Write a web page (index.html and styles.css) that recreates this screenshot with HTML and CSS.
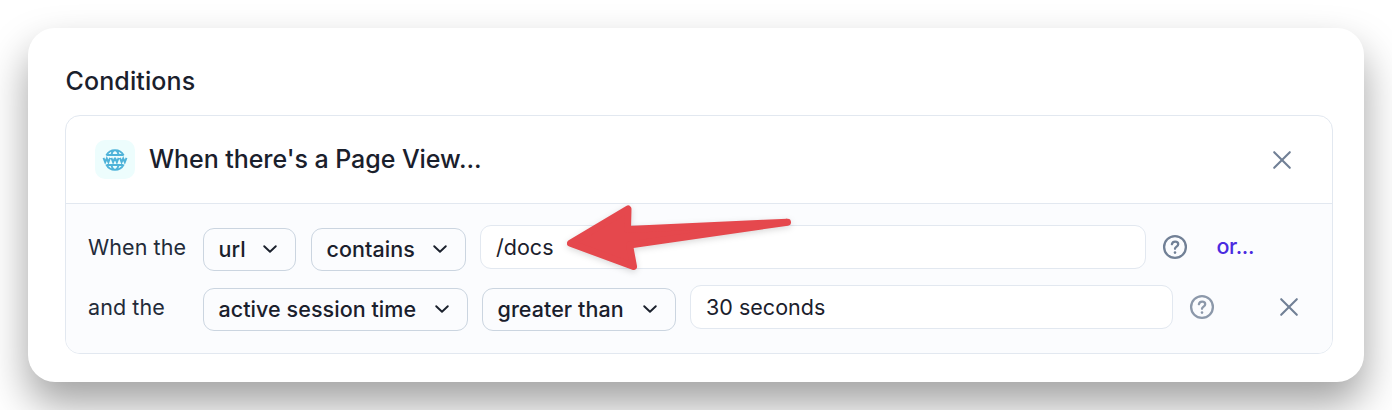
FILE: index.html
```html
<!DOCTYPE html>
<html lang="en">
<head>
<meta charset="utf-8">
<title>Conditions</title>
<link rel="stylesheet" href="styles.css">
</head>
<body>
<main class="card">
  <h2 class="title"><span>Conditions</span></h2>
  <section class="panel">
    <header class="panel-head">
      <span class="badge">
        <svg width="26" height="24" viewBox="0 0 26 24" fill="none" stroke="#4fb3d9" stroke-width="1.900">
          <path d="M4.300 7.400A9.800 9.800 0 0 1 21.700 7.400M4.300 16.600A9.800 9.800 0 0 0 21.700 16.600M4.500 7h17M4.500 17h17M9.300 7.500C10 4 11.500 2.300 13 2.300s3 1.700 3.700 5.200M9.300 16.500c.7 3.500 2.200 5.200 3.700 5.200s3-1.700 3.700-5.200"/>
          <path class="www" d="M1.500 9.800l1.700 4.400 1.600-3.700 1.600 3.700L8.100 9.800M9.400 9.800l1.700 4.400 1.600-3.700h.6l1.600 3.700L16.600 9.800M17.900 9.800l1.700 4.400 1.600-3.700 1.600 3.700L24.500 9.800"/>
        </svg>
      </span>
      <h3 class="event"><span>When there's a Page View...</span></h3>
      <button class="icon-btn" aria-label="Remove"><svg width="20" height="20" viewBox="0 0 20 20"><path class="cross" d="M2.200 2.200l15.600 15.600M17.800 2.200L2.200 17.800"/></svg></button>
    </header>
    <div class="rows">
      <div class="row">
        <span class="label"><span>When the</span></span>
        <button class="select url"><span>url</span><svg class="chev" width="16" height="10" viewBox="0 0 16 10"><path d="M2.200 2.200L8 7.800l5.800-5.600"/></svg></button>
        <button class="select contains"><span>contains</span><svg class="chev" width="16" height="10" viewBox="0 0 16 10"><path d="M2.200 2.200L8 7.800l5.800-5.600"/></svg></button>
        <div class="input docs"><span>/docs</span>
          <svg class="arrow" width="240" height="80" viewBox="560 200 240 80"><path d="M570.500 243.300L628 209L627.500 229.500L787.500 222.200L629.500 245L633.500 266.500Z"/></svg>
        </div>
        <svg class="help" width="26" height="26" viewBox="0 0 26 26"><circle cx="13" cy="13" r="10.900"/><path d="M9.900 10.200c.4-1.700 1.600-2.500 3.200-2.500 1.800 0 3.100 1.100 3.100 2.600 0 2.300-3.200 2.300-3.200 4.500"/><path class="dot" d="M13 18.500v.1"/></svg>
        <a class="or"><span>or...</span></a>
      </div>
      <div class="row">
        <span class="label"><span>and the</span></span>
        <button class="select session"><span>active session time</span><svg class="chev" width="16" height="10" viewBox="0 0 16 10"><path d="M2.200 2.200L8 7.800l5.800-5.600"/></svg></button>
        <button class="select greater"><span>greater than</span><svg class="chev" width="16" height="10" viewBox="0 0 16 10"><path d="M2.200 2.200L8 7.800l5.800-5.600"/></svg></button>
        <div class="input seconds"><span>30 seconds</span></div>
        <svg class="help muted" width="26" height="26" viewBox="0 0 26 26"><circle cx="13" cy="13" r="10.900"/><path d="M9.900 10.200c.4-1.700 1.600-2.500 3.200-2.500 1.800 0 3.100 1.100 3.100 2.600 0 2.300-3.200 2.300-3.200 4.500"/><path class="dot" d="M13 18.500v.1"/></svg>
        <button class="icon-btn row-remove" aria-label="Remove"><svg width="20" height="20" viewBox="0 0 20 20"><path class="cross" d="M2.200 2.200l15.600 15.600M17.800 2.200L2.200 17.800"/></svg></button>
      </div>
    </div>
  </section>
</main>
</body>
</html>
```
FILE: styles.css
```css
* { box-sizing: border-box; }
body {
  margin: 0;
  padding: 28px;
  height: 410px;
  overflow: hidden;
  background: #fff;
  color: #1a202c;
  font-family: Inter, sans-serif;
}
button { margin: 0; padding: 0; border: 0; background: none; font: inherit; color: inherit; }
svg { display: block; flex: none; }
.card {
  height: 354px;
  padding: 37px 31px 28px 37px;
  border-radius: 27px;
  background: #fff;
  box-shadow: 0 22px 42px rgba(0, 0, 0, .37);
}
.title { margin: 0; height: 50px; line-height: 32px; font-size: 25px; font-weight: 450; letter-spacing: .12px; padding-left: 0.500px; }
.panel { width: 1268px; height: 239px; border: 1px solid #e2e8f0; border-radius: 15px; overflow: hidden; }
.panel-head { display: flex; align-items: center; height: 88px; padding: 0 40.500px 0 29px; border-bottom: 1px solid #e2e8f0; }
.badge { display: flex; align-items: center; justify-content: center; width: 40px; height: 39px; border-radius: 10px; background: #edfdfd; }
.www { stroke-width: 1.900; }
.event { flex: 1; margin: -1px 0 0 14px; font-size: 25px; font-weight: 450; line-height: 32px; letter-spacing: -.05px; }
.cross { fill: none; stroke: #718096; stroke-width: 2.100; stroke-linecap: round; }
.rows { display: flex; flex-direction: column; gap: 16px; height: 149px; padding: 21px 22px; background: #fbfcfe; }
.row { display: flex; align-items: flex-start; height: 44px; }
.label { width: 115px; line-height: 44px; font-size: 21.500px; letter-spacing: .08px; color: #232b39; }
.select { display: flex; align-items: center; justify-content: space-between; height: 43px; margin-top: 3px; padding: 0 17.500px 1px 14.500px; border: 1px solid #cbd5e0; border-radius: 11px; font-size: 21.500px; font-weight: 500; letter-spacing: .06px; white-space: nowrap; }
.url { width: 93px; }
.contains { width: 155px; margin-left: 15px; }
.session { width: 265px; }
.greater { width: 194px; margin-left: 14px; }
.chev { fill: none; stroke: #1a202c; stroke-width: 1.900; stroke-linecap: round; stroke-linejoin: round; }
.input { position: relative; height: 44px; padding-left: 15px; border: 1px solid #e2e8f0; border-radius: 11px; background: #fff; line-height: 42px; font-size: 21.500px; letter-spacing: .02px; }
.docs { width: 666px; margin-left: 14px; }
.seconds { width: 483px; margin-left: 14px; }
.arrow { position: absolute; left: 79px; top: -26px; overflow: visible; filter: drop-shadow(0 2px 3px rgba(0, 0, 0, .15)); }
.arrow path { fill: #e5484d; stroke: #e5484d; stroke-width: 7; stroke-linejoin: round; }
.help { margin: 9px 0 0 16px; fill: none; stroke: #718096; stroke-width: 2.300; stroke-linecap: round; }
.help .dot { stroke-width: 2.600; }
.muted { opacity: .8; }
.or { margin-left: 28.500px; color: #4a2be0; line-height: 42px; font-size: 21.500px; font-weight: 450; letter-spacing: -.4px; }
.row-remove { margin: 12px 0 0 63.500px; }
```
